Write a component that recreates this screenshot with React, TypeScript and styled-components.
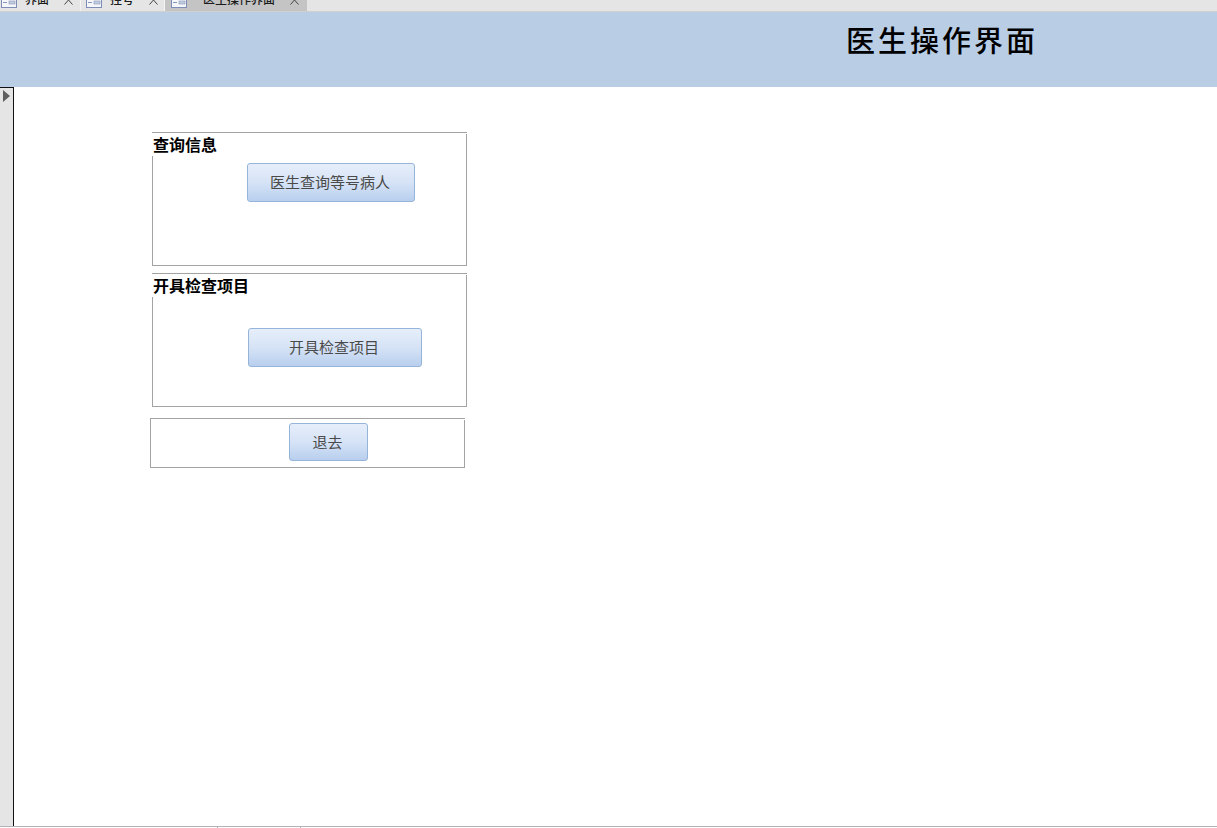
import React from "react";
import styled, { createGlobalStyle } from "styled-components";

const Global = createGlobalStyle`
  html, body { margin: 0; padding: 0; background: #fff; overflow: hidden; }
  #root { width: 1217px; height: 828px; }
`;

const FONT = `"Liberation Sans", "Noto Sans CJK SC", sans-serif`;

const Page = styled.div`
  width: 1217px;
  height: 828px;
  display: flex;
  flex-direction: column;
  font-family: ${FONT};
  overflow: hidden;
`;

const TabBar = styled.div`
  height: 12px;
  box-sizing: border-box;
  flex: none;
  display: flex;
  background: #e5e5e5;
  border-bottom: 1px solid #d0d0d0;
  overflow: hidden;
`;

const Tab = styled.div<{ $w: number; $active?: boolean; $textLeft: number; $closeLeft: number }>`
  width: ${(p) => p.$w}px;
  height: 11px;
  flex: none;
  background: ${(p) => (p.$active ? "#c4c4c4" : "#e5e5e5")};
  border-right: ${(p) => (p.$active ? "0" : "1px solid #f4f4f4")};
  box-sizing: border-box;
  display: grid;
  grid-template-columns: ${(p) => p.$textLeft}px ${(p) => p.$closeLeft - p.$textLeft}px 1fr;
  grid-template-rows: 11px;
  align-items: start;
`;

const TabIcon = styled.svg<{ $ml: number }>`
  width: 16px;
  height: 8px;
  display: block;
  margin-left: ${(p) => p.$ml}px;
`;

const TabText = styled.span`
  font-size: 12px;
  line-height: 12px;
  font-weight: 500;
  color: #1c1c1c;
  white-space: nowrap;
  margin-top: -6px;
`;

const TabClose = styled.svg`
  width: 10px;
  height: 6px;
  display: block;
`;

const Header = styled.header`
  height: 75px;
  flex: none;
  background: #b9cde5;
  display: flex;
  padding-left: 846px;
  box-sizing: border-box;
`;

const Title = styled.h1`
  margin: 9px 0 0;
  font-family: "Noto Sans CJK SC", sans-serif;
  font-size: 29px;
  line-height: 36px;
  font-weight: 500;
  letter-spacing: 3px;
  color: #000;
  white-space: nowrap;
`;

const Body = styled.main`
  flex: 1;
  display: flex;
  border-bottom: 1px solid #b0b2b8;
  min-height: 0;
`;

const Selector = styled.aside`
  width: 14px;
  flex: none;
  box-sizing: border-box;
  background: #e5e5e5;
  border-top: 1px solid #111;
  border-right: 1px solid #111;
  padding: 2px 0 0 3px;
`;

const Arrow = styled.div`
  width: 0;
  height: 0;
  border-left: 7px solid #5e5e5e;
  border-top: 6px solid transparent;
  border-bottom: 6px solid transparent;
`;

const Canvas = styled.section`
  flex: 1;
  display: flex;
  flex-direction: column;
  padding: 45px 0 0 138px;
  background: #fff;
`;

const Panel = styled.div<{ $h: number; $mt?: number; $ml?: number }>`
  position: relative;
  width: 315px;
  height: ${(p) => p.$h}px;
  margin-top: ${(p) => p.$mt ?? 0}px;
  margin-left: ${(p) => p.$ml ?? 0}px;
  box-sizing: border-box;
  border: 1px solid #a3a3a3;
  display: flex;
  align-items: flex-start;

  &::after {
    content: "";
    position: absolute;
    right: -1px;
    top: 0;
    width: 1px;
    height: 1px;
    background: #fff;
  }
`;

const PanelLabel = styled.div`
  position: absolute;
  left: -1px;
  top: 0;
  height: 23px;
  padding: 1px 1px 0;
  box-sizing: border-box;
  background: #fff;
  font-size: 16px;
  line-height: 23px;
  font-weight: 700;
  color: #000;
  white-space: nowrap;
`;

const Action = styled.button<{ $w: number; $h: number; $mt: number; $ml: number }>`
  width: ${(p) => p.$w}px;
  height: ${(p) => p.$h}px;
  margin: ${(p) => p.$mt}px 0 0 ${(p) => p.$ml}px;
  padding: 0 2px 2px 0;
  box-sizing: border-box;
  border: 1px solid #94b4d9;
  border-radius: 3px;
  background: linear-gradient(to bottom, #e6eefa 0%, #d6e3f6 50%, #b8cfee 100%);
  font-family: ${FONT};
  font-size: 15px;
  font-weight: 400;
  color: #4a4a4a;
  flex: none;
`;

const StatusBar = styled.footer`
  height: 1px;
  flex: none;
  display: flex;
  background: #fff;
`;

const StatusCell = styled.div<{ $w: number }>`
  width: ${(p) => p.$w}px;
  box-sizing: border-box;
  border-right: 1px solid #b0b2b8;
`;

const FormIcon = ({ ml }: { ml: number }) => (
  <TabIcon $ml={ml} viewBox="0 0 16 8">
    <rect x="0.5" y="-3" width="15" height="10.5" fill="#f4f6fa" stroke="#7d8db5" />
    <rect x="2" y="2" width="4" height="1" fill="#8a96b8" />
    <rect x="8" y="1" width="6" height="3" fill="#c3cde2" stroke="#8a96b8" strokeWidth="0.6" />
  </TabIcon>
);

const CloseMark = () => (
  <TabClose viewBox="0 0 10 6">
    <path d="M0.5 4.5 L4.5 0 L8.5 4.5" fill="none" stroke="#444" strokeWidth="1" />
  </TabClose>
);

const tabs = [
  { label: "界面", w: 81, iconLeft: 1, textLeft: 25, closeLeft: 64 },
  { label: "挂号", w: 84, iconLeft: 5, textLeft: 29, closeLeft: 68 },
  { label: "医生操作界面", w: 142, iconLeft: 6, textLeft: 38, closeLeft: 125, active: true },
];

const App = () => (
  <>
    <Global />
    <Page>
      <TabBar>
        {tabs.map((t) => (
          <Tab key={t.label} $w={t.w} $active={t.active} $textLeft={t.textLeft} $closeLeft={t.closeLeft}>
            <FormIcon ml={t.iconLeft} />
            <TabText>{t.label}</TabText>
            <CloseMark />
          </Tab>
        ))}
      </TabBar>
      <Header>
        <Title>医生操作界面</Title>
      </Header>
      <Body>
        <Selector>
          <Arrow />
        </Selector>
        <Canvas>
          <Panel $h={134}>
            <PanelLabel>查询信息</PanelLabel>
            <Action $w={168} $h={39} $mt={30} $ml={94}>医生查询等号病人</Action>
          </Panel>
          <Panel $h={134} $mt={7}>
            <PanelLabel>开具检查项目</PanelLabel>
            <Action $w={174} $h={39} $mt={54} $ml={95}>开具检查项目</Action>
          </Panel>
          <Panel $h={50} $mt={11} $ml={-2}>
            <Action $w={79} $h={38} $mt={4} $ml={138}>退去</Action>
          </Panel>
        </Canvas>
      </Body>
      <StatusBar>
        <StatusCell $w={218} />
        <StatusCell $w={83} />
      </StatusBar>
    </Page>
  </>
);

export default App;
